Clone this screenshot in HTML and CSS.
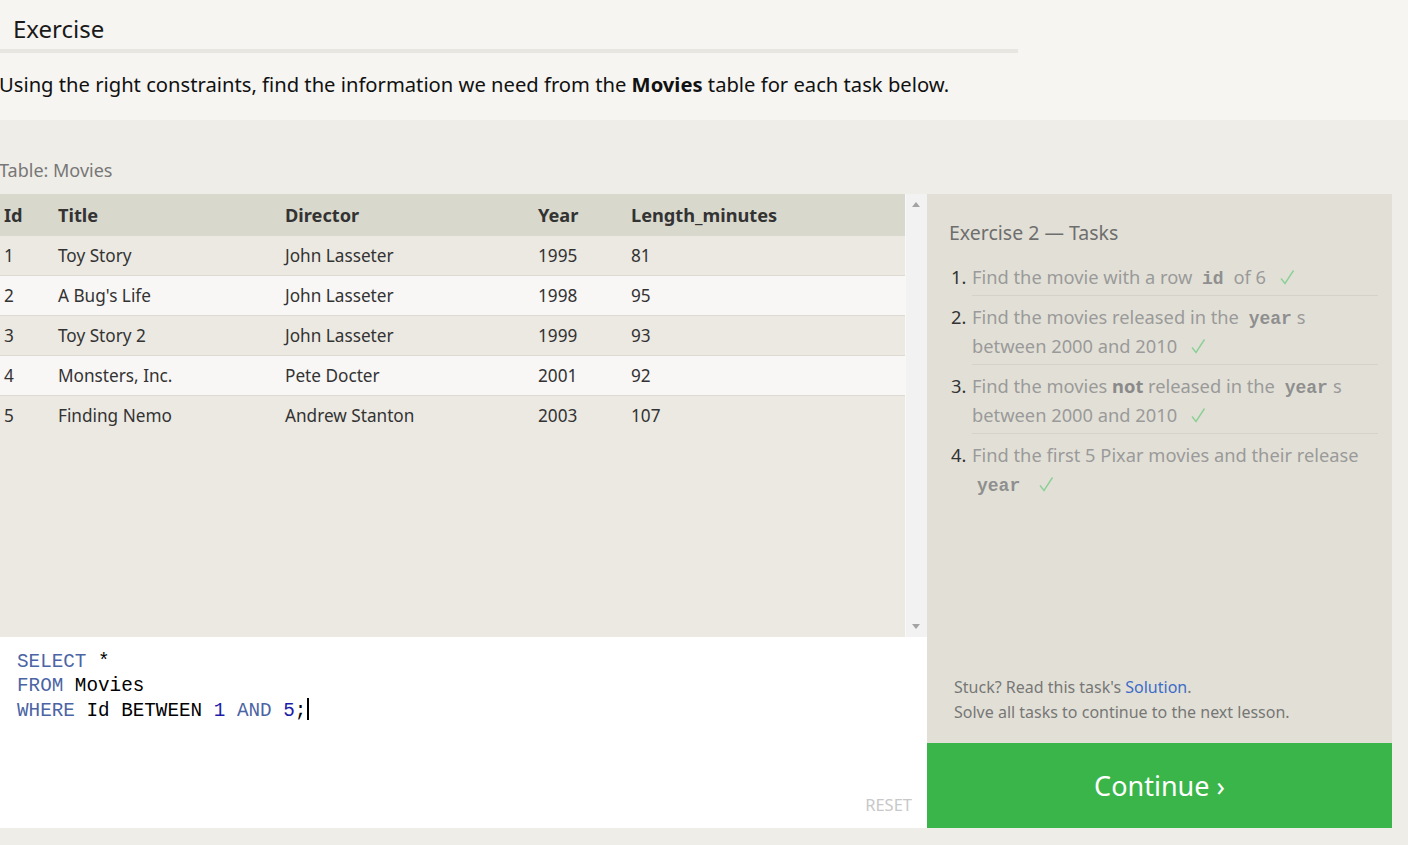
FILE: index.html
```html
<!DOCTYPE html>
<html>
<head>
<meta charset="utf-8">
<link rel="stylesheet" href="styles.css">
</head>
<body>
<div class="top">
  <h2 class="ex-title">Exercise</h2>
  <p class="ex-desc">Using the right constraints, find the information we need from the <b>Movies</b> table for each task below.</p>
</div>
<div class="main">
  <div class="table-label">Table: Movies</div>
  <div class="workspace">
    <div class="left">
      <div class="table-wrap">
        <div class="table">
          <div class="row head"><div>Id</div><div>Title</div><div>Director</div><div>Year</div><div>Length_minutes</div></div>
          <div class="row odd"><div>1</div><div>Toy Story</div><div>John Lasseter</div><div>1995</div><div>81</div></div>
          <div class="row even"><div>2</div><div>A Bug's Life</div><div>John Lasseter</div><div>1998</div><div>95</div></div>
          <div class="row odd"><div>3</div><div>Toy Story 2</div><div>John Lasseter</div><div>1999</div><div>93</div></div>
          <div class="row even"><div>4</div><div>Monsters, Inc.</div><div>Pete Docter</div><div>2001</div><div>92</div></div>
          <div class="row odd last"><div>5</div><div>Finding Nemo</div><div>Andrew Stanton</div><div>2003</div><div>107</div></div>
        </div>
        <div class="scrollbar">
          <span class="arrow up"></span>
          <span class="arrow down"></span>
        </div>
      </div>
      <div class="editor">
        <pre class="code"><span class="kw">SELECT</span> *
<span class="kw">FROM</span> Movies
<span class="kw">WHERE</span> Id BETWEEN <span class="num">1</span> <span class="kw">AND</span> <span class="num">5</span>;<span class="cursor"></span></pre>
        <div class="reset">RESET</div>
      </div>
    </div>
    <div class="right">
      <div class="tasks">
        <div class="tasks-title">Exercise 2 — Tasks</div>
        <ol class="task-list">
          <li><span class="n">1.</span><div class="t">Find the movie with a row <code>id</code> of 6 <svg class="check" width="16" height="17" viewBox="0 0 16 17"><polyline points="2,9.5 6,14.5 14.5,1.5" fill="none" stroke="#8ccf96" stroke-width="1.4"/></svg></div></li>
          <li><span class="n">2.</span><div class="t">Find the movies released in the <code>year</code>s between 2000 and 2010 <svg class="check" width="16" height="17" viewBox="0 0 16 17"><polyline points="2,9.5 6,14.5 14.5,1.5" fill="none" stroke="#8ccf96" stroke-width="1.4"/></svg></div></li>
          <li><span class="n">3.</span><div class="t">Find the movies <b>not</b> released in the <code>year</code>s between 2000 and 2010 <svg class="check" width="16" height="17" viewBox="0 0 16 17"><polyline points="2,9.5 6,14.5 14.5,1.5" fill="none" stroke="#8ccf96" stroke-width="1.4"/></svg></div></li>
          <li class="nob"><span class="n">4.</span><div class="t">Find the first 5 Pixar movies and their release <code>year</code> <svg class="check" width="16" height="17" viewBox="0 0 16 17"><polyline points="2,9.5 6,14.5 14.5,1.5" fill="none" stroke="#8ccf96" stroke-width="1.4"/></svg></div></li>
        </ol>
        <div class="stuck">
          <div>Stuck? Read this task's <a class="sol">Solution</a>.</div>
          <div>Solve all tasks to continue to the next lesson.</div>
        </div>
      </div>
      <div class="continue">Continue ›</div>
    </div>
  </div>
</div>
</body>
</html>
```
FILE: styles.css
```css
* { box-sizing: border-box; }
html, body { margin: 0; padding: 0; }
body {
  width: 1408px;
  height: 845px;
  overflow: hidden;
  background: #efede7;
  font-family: "Noto Sans", "Open Sans", sans-serif;
}
.top {
  background: #f6f5f2;
  height: 120px;
  padding-top: 12px;
}
.ex-title {
  margin: 0;
  width: 1018px;
  font-weight: normal;
  font-size: 24px;
  line-height: 34px;
  color: #1a1a1a;
  padding-left: 13px;
  padding-bottom: 3px;
  border-bottom: 4px solid #e8e6e0;
}
.ex-desc {
  margin: 16px 0 0 0;
  font-size: 20.2px;
  line-height: 30px;
  color: #111;
  text-indent: -1px;
}
.ex-desc b { font-weight: bold; }
.main { padding-top: 36px; }
.table-label {
  font-size: 18px;
  color: #777;
  line-height: 28px;
  margin-left: -1px;
  height: 38px;
}
.workspace {
  display: flex;
  width: 1392px;
}
.left { width: 927px; display: flex; flex-direction: column; }
.table-wrap {
  display: flex;
  height: 443px;
  background: #ebe9e2;
}
.table { flex: 1; }
.row {
  display: grid;
  grid-template-columns: 54px 227px 253px 93px 1fr;
  height: 40px;
  align-items: center;
  font-size: 17.2px;
  color: #333;
  border-bottom: 1px solid #dcdad3;
}
.row > div { padding-left: 4px; }
.row.head {
  height: 42px;
  background: #d9d8cd;
  font-weight: bold;
  font-size: 18.2px;
  color: #333;
  border-bottom: none;
}
.row.odd { background: #ebe9e2; }
.row.even { background: #f8f7f5; }
.row.last { border-bottom-color: #ebe9e2; }
.scrollbar {
  width: 22px;
  background: #f2f2f2;
  border-left: 1px solid #f8f8f8;
  position: relative;
}
.arrow {
  position: absolute;
  left: 6px;
  width: 0; height: 0;
  border-left: 4px solid transparent;
  border-right: 4px solid transparent;
}
.arrow.up { top: 8px; border-bottom: 5px solid #a3a3a3; }
.arrow.down { bottom: 8px; border-top: 5px solid #a3a3a3; }
.editor {
  background: #fff;
  height: 191px;
  position: relative;
  padding: 13px 0 0 17px;
}
.code {
  margin: 0;
  font-family: "Liberation Mono", "DejaVu Sans Mono", monospace;
  font-size: 19.3px;
  line-height: 24px;
  color: #000;
}
.kw { color: #4a64a4; }
.num { color: #1c1ca8; }
.cursor {
  display: inline-block;
  width: 2px;
  height: 22px;
  background: #000;
  vertical-align: -4px;
  margin-left: 1px;
}
.reset {
  position: absolute;
  right: 15px;
  bottom: 12px;
  font-size: 16.5px;
  color: #c8c8c8;
}
.right {
  width: 465px;
  display: flex;
  flex-direction: column;
}
.tasks {
  background: #e2e0d6;
  height: 549px;
  padding: 25px 14px 0 22px;
  display: flex;
  flex-direction: column;
}
.tasks-title {
  font-size: 19.5px;
  color: #6e6e6e;
  line-height: 28px;
  margin-bottom: 15px;
}
.task-list {
  list-style: none;
  margin: 0;
  padding: 0;
}
.task-list li {
  display: flex;
  font-size: 18.3px;
  line-height: 29px;
  padding: 0 0 5px 0;
  margin-bottom: 6px;
  position: relative;
}
.task-list li::after {
  content: "";
  position: absolute;
  left: 23px;
  right: 0;
  bottom: 0;
  border-bottom: 1px solid #d5d3c9;
}
.task-list li.nob::after { display: none; }
.n { width: 23px; color: #333; padding-left: 2px; }
.t { flex: 1; color: #9a9a9a; }
.t b { color: #8a8a8a; }
.t code {
  font-family: "Liberation Mono", "DejaVu Sans Mono", monospace;
  font-weight: bold;
  font-size: 18px;
  line-height: 20px;
  color: #8f8f8f;
  padding: 0 5px;
}
.check { margin-left: 8px; vertical-align: -2px; }
.stuck {
  margin-top: auto;
  padding: 0 0 18px 5px;
  font-size: 16px;
  line-height: 25px;
  color: #777;
}
.sol { color: #3c6cc8; }
.continue {
  background: #3ab54a;
  height: 85px;
  color: #fff;
  font-size: 27px;
  display: flex;
  align-items: center;
  justify-content: center;
}
```
